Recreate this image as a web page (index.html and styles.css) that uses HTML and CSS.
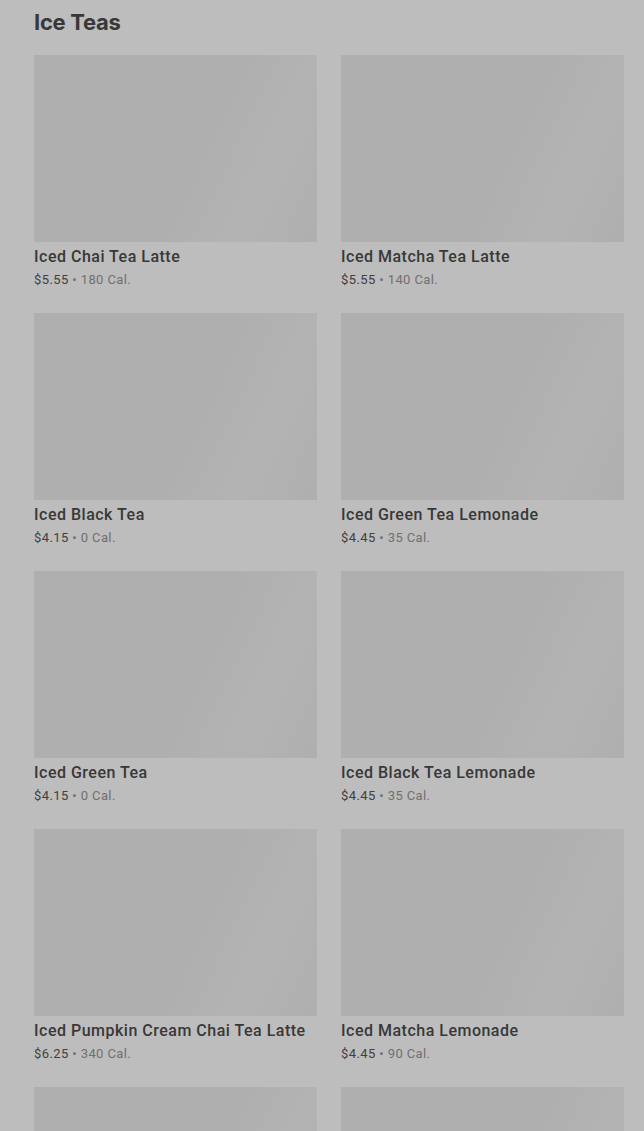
FILE: index.html
```html
<!DOCTYPE html>
<html lang="en">
<head>
    <meta charset="UTF-8">
    <title>Ice Teas</title>
    <link rel="stylesheet" href="styles.css">
</head>
<body>
    <div class="section">
        <h2 class="section-title">Ice Teas</h2>
        <div class="menu-grid">
            <div class="item">
                <div class="item-image"></div>
                <div class="item-name">Iced Chai Tea Latte</div>
                <div class="item-meta"><span class="price">$5.55</span> • 180 Cal.</div>
            </div>
            <div class="item">
                <div class="item-image"></div>
                <div class="item-name">Iced Matcha Tea Latte</div>
                <div class="item-meta"><span class="price">$5.55</span> • 140 Cal.</div>
            </div>
            <div class="item">
                <div class="item-image"></div>
                <div class="item-name">Iced Black Tea</div>
                <div class="item-meta"><span class="price">$4.15</span> • 0 Cal.</div>
            </div>
            <div class="item">
                <div class="item-image"></div>
                <div class="item-name">Iced Green Tea Lemonade</div>
                <div class="item-meta"><span class="price">$4.45</span> • 35 Cal.</div>
            </div>
            <div class="item">
                <div class="item-image"></div>
                <div class="item-name">Iced Green Tea</div>
                <div class="item-meta"><span class="price">$4.15</span> • 0 Cal.</div>
            </div>
            <div class="item">
                <div class="item-image"></div>
                <div class="item-name">Iced Black Tea Lemonade</div>
                <div class="item-meta"><span class="price">$4.45</span> • 35 Cal.</div>
            </div>
            <div class="item">
                <div class="item-image"></div>
                <div class="item-name">Iced Pumpkin Cream Chai Tea Latte</div>
                <div class="item-meta"><span class="price">$6.25</span> • 340 Cal.</div>
            </div>
            <div class="item">
                <div class="item-image"></div>
                <div class="item-name">Iced Matcha Lemonade</div>
                <div class="item-meta"><span class="price">$4.45</span> • 90 Cal.</div>
            </div>
            <div class="item">
                <div class="item-image"></div>
            </div>
            <div class="item">
                <div class="item-image"></div>
            </div>
        </div>
    </div>
</body>
</html>
```

FILE: styles.css
```css
:root {
    --page-bg: #bdbdbd;
    --image-bg: #afafaf;
    --title-color: #383838;
    --price-color: #404040;
    --meta-color: #707070;
}

* {
    margin: 0;
    padding: 0;
    box-sizing: border-box;
}

html, body {
    background-color: var(--page-bg);
}

body {
    font-family: Roboto, 'Liberation Sans', Arial, sans-serif;
    color: var(--title-color);
    height: 1131px;
    overflow: hidden;
}

.section {
    padding: 8px 20px 0 34px;
}

.section-title {
    font-family: Inter, Roboto, sans-serif;
    font-size: 22px;
    line-height: 28px;
    font-weight: 700;
    letter-spacing: -0.3px;
    color: #383838;
    margin-bottom: 19px;
}

.menu-grid {
    display: grid;
    grid-template-columns: 283px 283px;
    column-gap: 24px;
    row-gap: 24px;
}

.item-image {
    height: 187px;
    background-color: var(--image-bg);
    background-image: linear-gradient(115deg, #afafaf 0%, #afafaf 55%, #b3b3b3 78%, #b1b1b1 90%, #afafaf 100%);
}

.item-name {
    margin-top: 5px;
    font-size: 16px;
    line-height: 20px;
    font-weight: 500;
    letter-spacing: 0.5px;
    color: var(--title-color);
}

.item-meta {
    margin-top: 4px;
    font-size: 13px;
    line-height: 18px;
    letter-spacing: 0.4px;
    color: var(--meta-color);
}

.item-meta .price {
    color: var(--price-color);
}
```
